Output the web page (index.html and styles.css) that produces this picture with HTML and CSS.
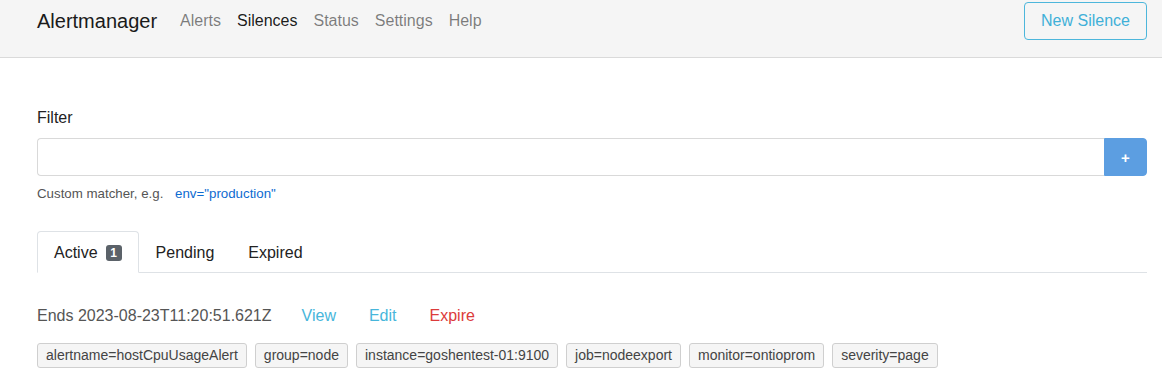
FILE: index.html
```html
<!DOCTYPE html>
<html>
<head>
<meta charset="utf-8">
<link rel="stylesheet" href="styles.css">
</head>
<body>
<header class="navbar">
  <div class="nav-left">
    <span class="brand">Alertmanager</span>
    <nav class="nav-links">
      <a class="nav-link">Alerts</a>
      <a class="nav-link active">Silences</a>
      <a class="nav-link">Status</a>
      <a class="nav-link">Settings</a>
      <a class="nav-link">Help</a>
    </nav>
  </div>
  <button class="btn-new">New Silence</button>
</header>
<main class="content">
  <label class="filter-label">Filter</label>
  <div class="input-group">
    <input class="filter-input" type="text">
    <button class="btn-plus">+</button>
  </div>
  <div class="form-text">Custom matcher, e.g. <a class="example">env="production"</a></div>
  <ul class="tabs">
    <li class="tab active">Active <span class="badge">1</span></li>
    <li class="tab">Pending</li>
    <li class="tab">Expired</li>
  </ul>
  <div class="silence">
    <div class="silence-head">
      <span class="ends">Ends 2023-08-23T11:20:51.621Z</span>
      <a class="action view">View</a>
      <a class="action edit">Edit</a>
      <a class="action expire">Expire</a>
    </div>
    <div class="matchers">
      <span class="matcher">alertname=hostCpuUsageAlert</span>
      <span class="matcher">group=node</span>
      <span class="matcher">instance=goshentest-01:9100</span>
      <span class="matcher">job=nodeexport</span>
      <span class="matcher">monitor=ontioprom</span>
      <span class="matcher">severity=page</span>
    </div>
  </div>
</main>
</body>
</html>
```
FILE: styles.css
```css
* { box-sizing: border-box; }
body {
  margin: 0;
  font-family: "Liberation Sans", Arial, sans-serif;
  font-size: 16px;
  line-height: 1.5;
  color: #212529;
  background: #fff;
}
a { cursor: pointer; }
.navbar {
  display: flex;
  justify-content: space-between;
  align-items: flex-start;
  height: 58px;
  padding: 2px 15px 0 37px;
  background: #f5f5f5;
  border-bottom: 1px solid #dadada;
}
.nav-left {
  display: flex;
  align-items: center;
  height: 38px;
}
.brand {
  font-size: 20px;
  color: #1a1a1a;
  margin-right: 15px;
  line-height: 38px;
}
.nav-links { display: flex; }
.nav-link {
  padding: 0 8px;
  color: rgba(0,0,0,.5);
  line-height: 38px;
}
.nav-link.active { color: rgba(0,0,0,.9); }
.btn-new {
  font-family: inherit;
  font-size: 16px;
  height: 38px;
  width: 123px;
  padding: 0 12px;
  background: transparent;
  border: 1px solid #4cb6db;
  color: #3fb0d8;
  border-radius: 4px;
}
.content {
  width: 1110px;
  margin-left: 37px;
  padding-top: 48px;
}
.filter-label {
  display: block;
  margin-bottom: 8px;
  color: #222;
}
.input-group { display: flex; }
.filter-input {
  flex: 1;
  height: 38px;
  border: 1px solid #d9d9d9;
  border-right: none;
  border-radius: 4px 0 0 4px;
  font-family: inherit;
  font-size: 16px;
  padding: 6px 12px;
}
.btn-plus {
  width: 43px;
  height: 38px;
  background: #5c9ee1;
  border: 1px solid #5c9ee1;
  color: #fff;
  font-weight: bold;
  font-size: 15px;
  border-radius: 0 4px 4px 0;
  font-family: inherit;
  padding: 0;
}
.form-text {
  margin-top: 8px;
  font-size: 13.3px;
  line-height: 19px;
  color: #555;
}
.example {
  color: #0d6bd1;
  margin-left: 8px;
}
.tabs {
  list-style: none;
  margin: 28px 0 0;
  padding: 0;
  display: flex;
  border-bottom: 1px solid #dee2e6;
}
.tab {
  padding: 9px 16px 7px;
  border: 1px solid transparent;
  border-radius: 4px 4px 0 0;
  margin-bottom: -1px;
  color: #222;
  display: flex;
  align-items: center;
}
.tab.active {
  border-color: #dee2e6 #dee2e6 #fff;
  background: #fff;
}
.badge {
  display: inline-block;
  background: #5b6269;
  color: #fff;
  font-size: 12px;
  font-weight: bold;
  line-height: 16px;
  min-width: 16px;
  text-align: center;
  border-radius: 3px;
  margin-left: 8px;
}
.silence { padding-top: 31px; }
.silence-head {
  display: flex;
  align-items: center;
  line-height: 24px;
}
.ends { color: #555; margin-right: 18px; }
.action { padding: 0 12px; margin-right: 9px; }
.view, .edit { color: #47b6db; }
.expire { color: #dc3b3b; }
.matchers {
  display: flex;
  flex-wrap: wrap;
  gap: 8px;
  margin-top: 15px;
}
.matcher {
  font-size: 14px;
  line-height: 23px;
  padding: 0 8px;
  background: #f5f5f5;
  border: 1px solid #cfcfcf;
  border-radius: 3px;
  color: #444;
}
```
